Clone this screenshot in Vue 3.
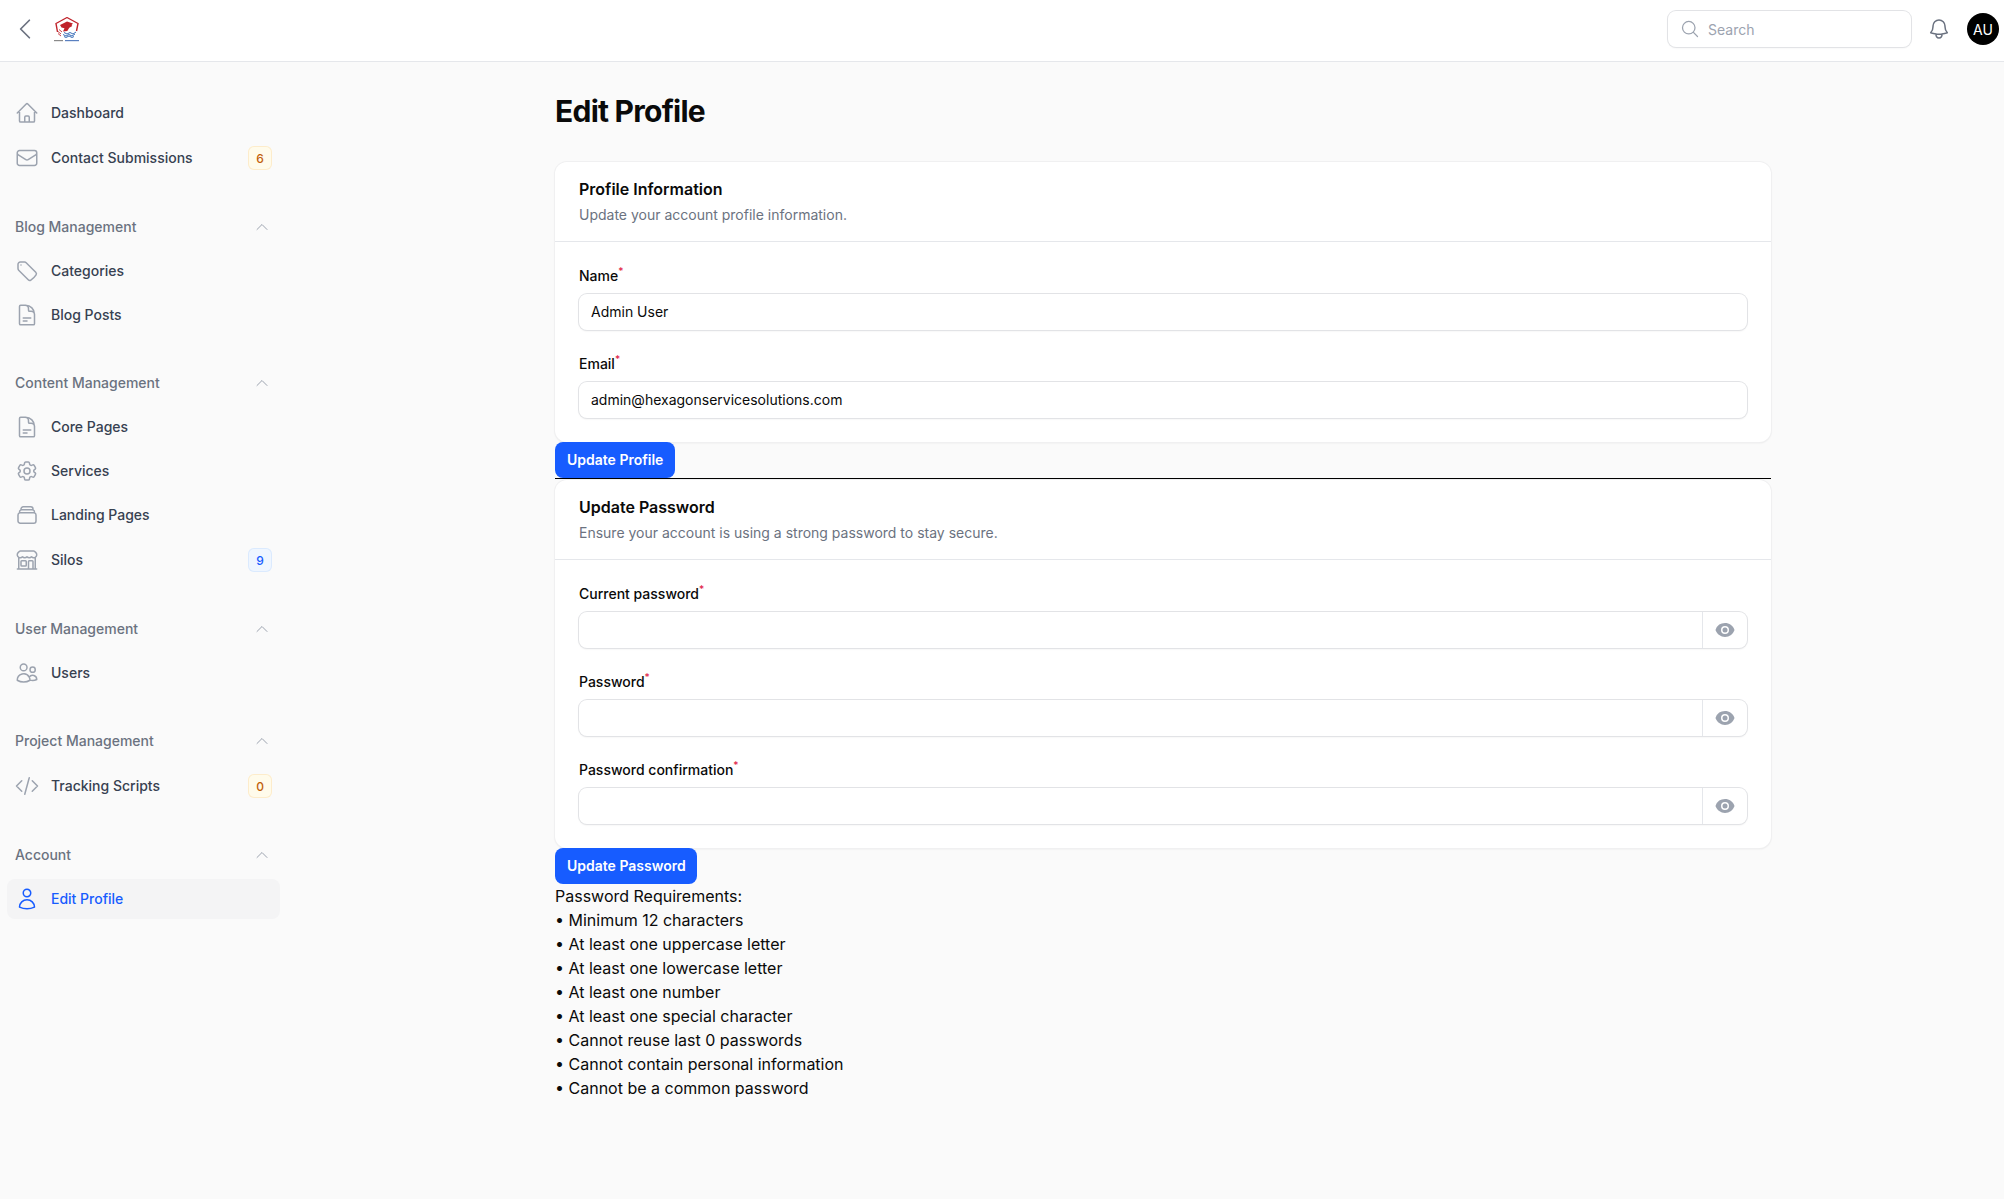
<script setup>
const doc = 'M19.5 14.25v-2.625a3.375 3.375 0 0 0-3.375-3.375h-1.5A1.125 1.125 0 0 1 13.5 7.125v-1.5a3.375 3.375 0 0 0-3.375-3.375H8.25m0 12.75h7.5m-7.5 3H12M10.5 2.25H5.625c-.621 0-1.125.504-1.125 1.125v17.25c0 .621.504 1.125 1.125 1.125h12.75c.621 0 1.125-.504 1.125-1.125V11.25a9 9 0 0 0-9-9Z'
const groups = [
  { items: [
    { label: 'Dashboard', d: 'm2.25 12 8.954-8.955c.44-.439 1.152-.439 1.591 0L21.75 12M4.5 9.75v10.125c0 .621.504 1.125 1.125 1.125H9.75v-4.875c0-.621.504-1.125 1.125-1.125h2.25c.621 0 1.125.504 1.125 1.125V21h4.125c.621 0 1.125-.504 1.125-1.125V9.75M8.25 21h8.25' },
    { label: 'Contact Submissions', badge: '6', tone: 'warn', d: 'M21.75 6.75v10.5a2.25 2.25 0 0 1-2.25 2.25h-15a2.25 2.25 0 0 1-2.25-2.25V6.75m19.5 0A2.25 2.25 0 0 0 19.5 4.5h-15a2.25 2.25 0 0 0-2.25 2.25m19.5 0v.243a2.25 2.25 0 0 1-1.07 1.916l-7.5 4.615a2.25 2.25 0 0 1-2.36 0L3.32 8.91a2.25 2.25 0 0 1-1.07-1.916V6.75' },
  ] },
  { title: 'Blog Management', items: [
    { label: 'Categories', d: 'M9.568 3H5.25A2.25 2.25 0 0 0 3 5.25v4.318c0 .597.237 1.17.659 1.591l9.581 9.581c.699.699 1.78.872 2.607.33a18.095 18.095 0 0 0 5.223-5.223c.542-.827.369-1.908-.33-2.607L11.16 3.66A2.25 2.25 0 0 0 9.568 3ZM6 6h.008v.008H6V6Z' },
    { label: 'Blog Posts', d: doc },
  ] },
  { title: 'Content Management', items: [
    { label: 'Core Pages', d: doc },
    { label: 'Services', d: 'M9.594 3.94c.09-.542.56-.94 1.11-.94h2.593c.55 0 1.02.398 1.11.94l.213 1.281c.063.374.313.686.645.87.074.04.147.083.22.127.325.196.72.257 1.075.124l1.217-.456a1.125 1.125 0 0 1 1.37.49l1.296 2.247a1.125 1.125 0 0 1-.26 1.431l-1.003.827c-.293.241-.438.613-.43.992a7.723 7.723 0 0 1 0 .255c-.008.378.137.75.43.991l1.004.827c.424.35.534.955.26 1.43l-1.298 2.247a1.125 1.125 0 0 1-1.369.491l-1.217-.456c-.355-.133-.75-.072-1.076.124a6.47 6.47 0 0 1-.22.128c-.331.183-.581.495-.644.869l-.213 1.281c-.09.543-.56.94-1.11.94h-2.594c-.55 0-1.019-.398-1.11-.94l-.213-1.281c-.062-.374-.312-.686-.644-.87a6.52 6.52 0 0 1-.22-.127c-.325-.196-.72-.257-1.076-.124l-1.217.456a1.125 1.125 0 0 1-1.369-.49l-1.297-2.247a1.125 1.125 0 0 1 .26-1.431l1.004-.827c.292-.24.437-.613.43-.991a6.932 6.932 0 0 1 0-.255c.007-.38-.138-.751-.43-.992l-1.004-.827a1.125 1.125 0 0 1-.26-1.43l1.297-2.247a1.125 1.125 0 0 1 1.37-.491l1.216.456c.356.133.751.072 1.076-.124.072-.044.146-.086.22-.128.332-.183.582-.495.644-.869l.214-1.28ZM15 12a3 3 0 1 1-6 0 3 3 0 0 1 6 0Z' },
    { label: 'Landing Pages', d: 'M6 6.878V6a2.25 2.25 0 0 1 2.25-2.25h7.5A2.25 2.25 0 0 1 18 6v.878m-12 0c.235-.083.487-.128.75-.128h10.5c.263 0 .515.045.75.128m-12 0A2.25 2.25 0 0 0 4.5 9v.878m13.5-3A2.25 2.25 0 0 1 19.5 9v.878m0 0a2.246 2.246 0 0 0-.75-.128H5.25c-.263 0-.515.045-.75.128m15 0A2.25 2.25 0 0 1 21 12v6a2.25 2.25 0 0 1-2.25 2.25H5.25A2.25 2.25 0 0 1 3 18v-6c0-.98.626-1.813 1.5-2.122' },
    { label: 'Silos', badge: '9', tone: 'info', d: 'M13.5 21v-7.5a.75.75 0 0 1 .75-.75h3a.75.75 0 0 1 .75.75V21m-4.5 0H2.36m11.14 0H18m0 0h3.64m-1.39 0V9.349M3.75 21V9.349m0 0a3.001 3.001 0 0 0 3.75-.615A2.993 2.993 0 0 0 9.75 9.75c.896 0 1.7-.393 2.25-1.016a2.993 2.993 0 0 0 2.25 1.016c.896 0 1.7-.393 2.25-1.015a3.001 3.001 0 0 0 3.75.614m-16.5 0a3.004 3.004 0 0 1-.621-4.72l1.189-1.19A1.5 1.5 0 0 1 5.378 3h13.243a1.5 1.5 0 0 1 1.06.44l1.19 1.189a3 3 0 0 1-.621 4.72M6.75 18h3.75a.75.75 0 0 0 .75-.75V13.5a.75.75 0 0 0-.75-.75H6.75a.75.75 0 0 0-.75.75v3.75c0 .414.336.75.75.75Z' },
  ] },
  { title: 'User Management', items: [
    { label: 'Users', d: 'M15 19.128a9.38 9.38 0 0 0 2.625.372 9.337 9.337 0 0 0 4.121-.952 4.125 4.125 0 0 0-7.533-2.493M15 19.128v-.003c0-1.113-.285-2.16-.786-3.07M15 19.128v.106A12.318 12.318 0 0 1 8.624 21c-2.331 0-4.512-.645-6.374-1.766l-.001-.109a6.375 6.375 0 0 1 11.964-3.07M12 6.375a3.375 3.375 0 1 1-6.75 0 3.375 3.375 0 0 1 6.75 0Zm8.25 2.25a2.625 2.625 0 1 1-5.25 0 2.625 2.625 0 0 1 5.25 0Z' },
  ] },
  { title: 'Project Management', items: [
    { label: 'Tracking Scripts', badge: '0', tone: 'warn', d: 'M17.25 6.75 22.5 12l-5.25 5.25m-10.5 0L1.5 12l5.25-5.25m7.5-3-4.5 16.5' },
  ] },
  { title: 'Account', items: [
    { label: 'Edit Profile', active: true, d: 'M15.75 6a3.75 3.75 0 1 1-7.5 0 3.75 3.75 0 0 1 7.5 0ZM4.501 20.118a7.5 7.5 0 0 1 14.998 0A17.933 17.933 0 0 1 12 21.75c-2.676 0-5.216-.584-7.499-1.632Z' },
  ] },
]
const profileFields = [
  { label: 'Name', value: 'Admin User' },
  { label: 'Email', value: 'admin@hexagonservicesolutions.com' },
]
const passwordFields = ['Current password', 'Password', 'Password confirmation']
const rules = [
  'Minimum 12 characters',
  'At least one uppercase letter',
  'At least one lowercase letter',
  'At least one number',
  'At least one special character',
  'Cannot reuse last 0 passwords',
  'Cannot contain personal information',
  'Cannot be a common password',
]
</script>

<template>
  <div class="page">
    <header class="topbar">
      <div class="top-left">
        <svg class="back" viewBox="0 0 24 24" fill="none" stroke="currentColor" stroke-width="1.5" stroke-linecap="round" stroke-linejoin="round"><path d="M15.75 19.5 8.25 12l7.5-7.5" /></svg>
        <svg class="logo" viewBox="0 0 28 26">
          <path d="M14 1.5 25 7.5 23.5 15M14 1.5 3 7.5 4.5 16" fill="none" stroke="#c0232b" stroke-width="1.4" />
          <path d="M7 9 14 5.5l6 2-1.5 1.5 .8 1-3 1.8-2 3.2-4.3.5 1.5-3.3-3-.7z" fill="#c0232b" />
          <path d="M5 15.5l3 2.5M5 17.5l3 2.5M6 13.5l3 2.5" stroke="#c9434a" stroke-width="1" fill="none" />
          <path d="M11 16.5l3 1.5 3-1.5 3 1.5 3-2M10 18.5l3 1.5 3-1.5 3 1.5 3-2M11 20.5l2 1 3-1.5 3 1.5 2-1" stroke="#3d6fb8" stroke-width="1" fill="none" />
          <rect x="1" y="24" width="9" height="1.2" fill="#8a8a8a" />
          <rect x="12" y="24" width="14" height="1.2" fill="#5a80c0" />
        </svg>
      </div>
      <div class="top-right">
        <label class="search">
          <svg viewBox="0 0 24 24" fill="none" stroke="currentColor" stroke-width="1.5" stroke-linecap="round" stroke-linejoin="round"><path d="m21 21-5.197-5.197m0 0A7.5 7.5 0 1 0 5.196 5.196a7.5 7.5 0 0 0 10.607 10.607Z" /></svg>
          <span>Search</span>
        </label>
        <svg class="bell" viewBox="0 0 24 24" fill="none" stroke="currentColor" stroke-width="1.5" stroke-linecap="round" stroke-linejoin="round"><path d="M14.857 17.082a23.848 23.848 0 0 0 5.454-1.31A8.967 8.967 0 0 1 18 9.75V9A6 6 0 0 0 6 9v.75a8.967 8.967 0 0 1-2.312 6.022c1.733.64 3.56 1.085 5.455 1.31m5.714 0a24.255 24.255 0 0 1-5.714 0m5.714 0a3 3 0 1 1-5.714 0" /></svg>
        <div class="avatar">AU</div>
      </div>
    </header>

    <div class="body">
      <aside class="sidebar">
        <section v-for="(g, i) in groups" :key="i" class="group">
          <div v-if="g.title" class="group-title">
            <span>{{ g.title }}</span>
            <svg viewBox="0 0 24 24" fill="none" stroke="currentColor" stroke-width="1.5" stroke-linecap="round" stroke-linejoin="round"><path d="m4.5 15.75 7.5-7.5 7.5 7.5" /></svg>
          </div>
          <ul class="items">
            <li v-for="it in g.items" :key="it.label" class="item" :class="{ active: it.active, tall: it.badge }">
              <svg class="item-icon" viewBox="0 0 24 24" fill="none" stroke="currentColor" stroke-width="1.5" stroke-linecap="round" stroke-linejoin="round"><path :d="it.d" /></svg>
              <span class="item-label">{{ it.label }}</span>
              <span v-if="it.badge" class="badge" :class="it.tone">{{ it.badge }}</span>
            </li>
          </ul>
        </section>
      </aside>

      <main class="main">
        <div class="content">
          <h1>Edit Profile</h1>

          <section class="card">
            <div class="card-head">
              <h2>Profile Information</h2>
              <p>Update your account profile information.</p>
            </div>
            <div class="card-body">
              <div v-for="f in profileFields" :key="f.label" class="field">
                <label>{{ f.label }}<sup>*</sup></label>
                <div class="input"><input type="text" :value="f.value" /></div>
              </div>
            </div>
          </section>
          <button class="btn" type="button">Update Profile</button>
          <hr />

          <section class="card">
            <div class="card-head">
              <h2>Update Password</h2>
              <p>Ensure your account is using a strong password to stay secure.</p>
            </div>
            <div class="card-body">
              <div v-for="f in passwordFields" :key="f" class="field">
                <label>{{ f }}<sup>*</sup></label>
                <div class="input">
                  <input type="password" />
                  <span class="suffix">
                    <svg viewBox="0 0 20 20" fill="currentColor"><path d="M10 12.5a2.5 2.5 0 1 0 0-5 2.5 2.5 0 0 0 0 5Z" /><path fill-rule="evenodd" clip-rule="evenodd" d="M.664 10.59a1.651 1.651 0 0 1 0-1.186A10.004 10.004 0 0 1 10 3c4.257 0 7.893 2.66 9.336 6.41.147.381.146.804 0 1.186A10.004 10.004 0 0 1 10 17c-4.257 0-7.893-2.66-9.336-6.41ZM14 10a4 4 0 1 1-8 0 4 4 0 0 1 8 0Z" /></svg>
                  </span>
                </div>
              </div>
            </div>
          </section>
          <button class="btn" type="button">Update Password</button>

          <div class="rules">
            <div>Password Requirements:</div>
            <div v-for="r in rules" :key="r">• {{ r }}</div>
          </div>
        </div>
      </main>
    </div>
  </div>
</template>

<style>
html, body { margin: 0; background: #fafafa; }
</style>

<style scoped>
.page {
  min-height: 1199px;
  background: #fafafa;
  font-family: Inter, "Liberation Sans", sans-serif;
  color: #0a0a0a;
  box-sizing: border-box;
}
.topbar {
  height: 62px;
  box-sizing: border-box;
  background: #fff;
  border-bottom: 1px solid #e5e7eb;
  display: flex;
  align-items: center;
  justify-content: space-between;
  padding: 0 5px 3px 0;
}
.top-left { display: flex; align-items: center; }
.back { width: 28px; height: 28px; color: #6b7280; margin-left: 11px; }
.logo { width: 28px; height: 26px; margin-left: 14px; }
.top-right { display: flex; align-items: center; }
.search {
  width: 243px;
  height: 36px;
  box-sizing: border-box;
  border-radius: 8px;
  background: #fff;
  box-shadow: 0 0 0 1px #e2e3e6, 0 1px 2px rgba(0,0,0,.08);
  display: flex;
  align-items: center;
  padding-left: 12px;
  gap: 8px;
  color: #9ca3af;
  font-size: 14px;
}
.search svg { width: 20px; height: 20px; }
.bell { width: 24px; height: 24px; color: #6b7280; margin-left: 16px; }
.avatar {
  width: 32px;
  height: 32px;
  border-radius: 50%;
  background: #000;
  color: #fff;
  font-size: 14px;
  display: flex;
  align-items: center;
  justify-content: center;
  margin-left: 16px;
}
.body { display: flex; }
.sidebar {
  width: 322px;
  flex: none;
  box-sizing: border-box;
  padding: 31px 42px 0 7px;
}
.group { margin-bottom: 38px; }
.group-title {
  height: 20px;
  padding: 0 10px 0 8px;
  margin-bottom: 14px;
  display: flex;
  align-items: center;
  justify-content: space-between;
  font-size: 14px;
  line-height: 20px;
  font-weight: 500;
  color: #6b7280;
}
.group-title svg { width: 16px; height: 16px; color: #9ca3af; }
.items { list-style: none; margin: 0; padding: 0; display: flex; flex-direction: column; gap: 4px; }
.item {
  height: 40px;
  display: flex;
  align-items: center;
  gap: 12px;
  padding: 0 8px;
  border-radius: 8px;
  font-size: 14px;
  font-weight: 500;
  color: #374151;
}
.item.tall { height: 42px; }
.item-icon { width: 24px; height: 24px; color: #9ca3af; flex: none; }
.item-label { flex: 1; padding-bottom: 2px; }
.item.active { background: #f4f4f5; color: #175cff; }
.item.active .item-icon { color: #175cff; }
.badge {
  width: 24px;
  height: 24px;
  box-sizing: border-box;
  border-radius: 6px;
  display: flex;
  align-items: center;
  justify-content: center;
  font-size: 12px;
  font-weight: 500;
}
.badge.warn { background: #fffbeb; color: #c2600a; box-shadow: inset 0 0 0 1px #fdeccb; }
.badge.info { background: #eff6ff; color: #175cff; box-shadow: inset 0 0 0 1px #dbeafe; }
.main { flex: 1; display: flex; justify-content: center; }
.content { width: 1216px; padding-top: 31px; }
h1 {
  margin: 0 0 33px;
  font-size: 30px;
  line-height: 36px;
  font-weight: 700;
  letter-spacing: -0.75px;
  color: #0a0a0a;
}
.card {
  background: #fff;
  border-radius: 12px;
  box-shadow: 0 0 0 1px #f0f0f1, 0 1px 2px rgba(0,0,0,.1);
}
.card-head { box-sizing: border-box; padding: 15px 24px 0; border-bottom: 1px solid #e5e7eb; height: 80px; }
h2 { margin: 0; font-size: 16px; line-height: 24px; font-weight: 600; color: #0a0a0a; }
.card-head p { margin: 4px 0 0; font-size: 14px; line-height: 20px; color: #6b7280; }
.card-body { padding: 24px; display: flex; flex-direction: column; gap: 24px; }
.field label { display: block; font-size: 14px; line-height: 20px; font-weight: 500; color: #0a0a0a; margin-bottom: 8px; }
sup { color: #e11d48; font-size: 10px; font-weight: 500; line-height: 0; }
.input {
  height: 36px;
  border-radius: 8px;
  background: #fff;
  display: flex;
  box-shadow: 0 0 0 1px #e2e3e6, 0 1px 2px rgba(0,0,0,.1);
}
.input input {
  flex: 1;
  min-width: 0;
  border: 0;
  outline: 0;
  background: transparent;
  padding: 0 12px;
  font: 400 14px/20px Inter, sans-serif;
  color: #0a0a0a;
}
.suffix {
  width: 45px;
  box-sizing: border-box;
  border-left: 1px solid #e5e7eb;
  display: flex;
  align-items: center;
  justify-content: center;
  color: #9ca3af;
}
.suffix svg { width: 20px; height: 20px; }
.btn {
  display: block;
  height: 36px;
  padding: 0 11.5px 0 12px;
  border: 0;
  border-radius: 8px;
  background: #175cff;
  color: #fff;
  font: 600 14px/20px Inter, sans-serif;
}
hr { margin: 0 0 1px; border: 0; border-top: 1px solid #000; }
.rules { font-size: 16px; line-height: 24px; color: #0a0a0a; }
</style>
